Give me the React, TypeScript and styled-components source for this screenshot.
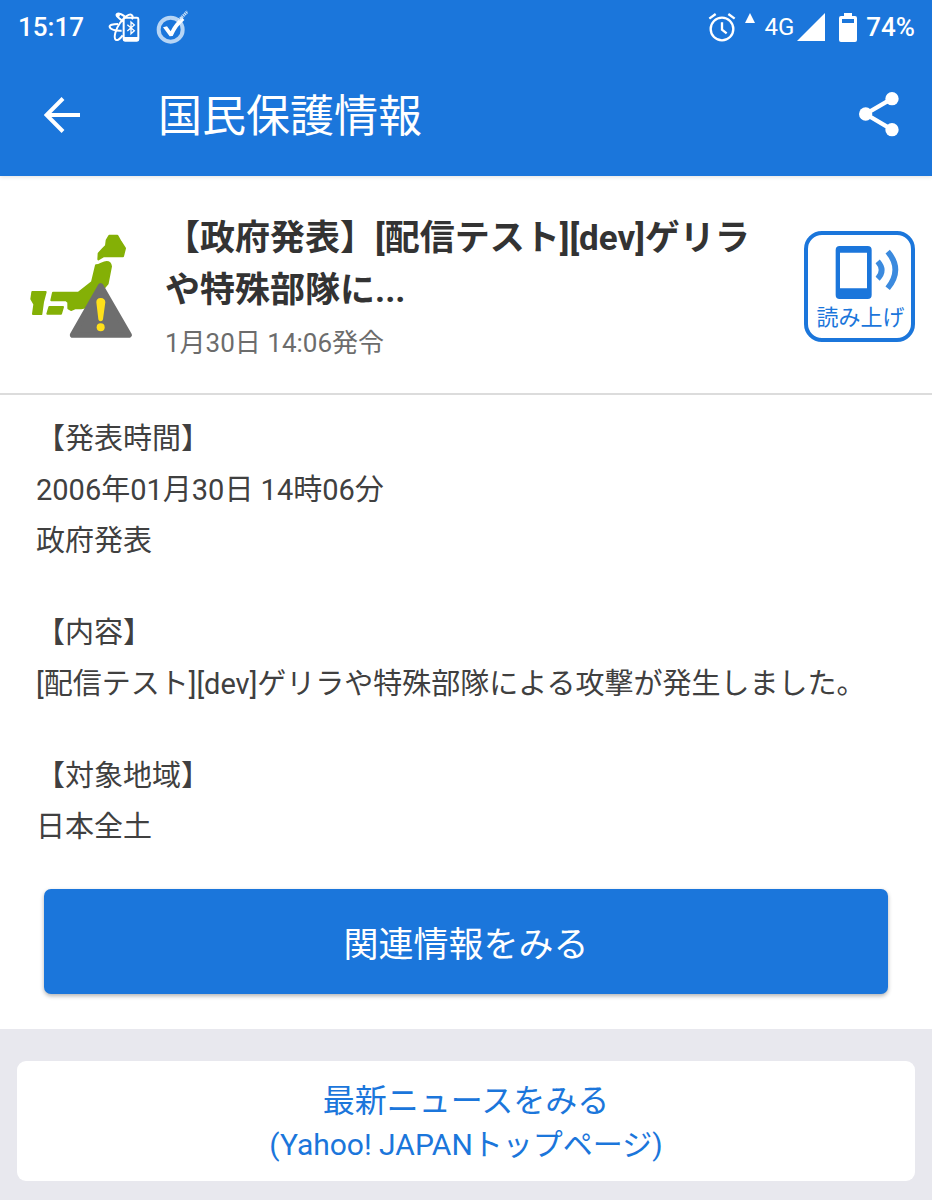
import React from "react";
import styled, { createGlobalStyle } from "styled-components";

const BLUE = "#1b76db";

const GlobalStyle = createGlobalStyle`
  * { box-sizing: border-box; }
  body {
    margin: 0;
    min-height: 100vh;
    background: #e8e8ee;
    color: #333;
    font-family: Roboto, "Noto Sans CJK JP", sans-serif;
  }
  svg { display: block; flex: none; }
  h1, h2, p { margin: 0; }
`;

const Header = styled.header`
  position: relative;
  background: ${BLUE};
  color: #fff;
  box-shadow: 0 1px 4px rgba(0, 0, 0, 0.12);
`;

const StatusBar = styled.div`
  display: flex;
  align-items: center;
  justify-content: space-between;
  height: 54px;
  padding: 0 17px 0 18px;
  font-size: 26px;
  font-weight: 500;
`;

const StatusGroup = styled.div<{ $gap: number }>`
  display: flex;
  align-items: center;
  gap: ${(p) => p.$gap}px;
`;

const Clock = styled.time`
  margin-right: 8px;
`;

const Network = styled.span`
  font-size: 24px;
  font-weight: 400;
`;

const Toolbar = styled.div`
  display: flex;
  align-items: center;
  height: 122px;
  padding: 0 23px 0 32px;
`;

const IconButton = styled.button`
  display: flex;
  align-items: center;
  justify-content: center;
  width: 60px;
  height: 60px;
  padding: 0;
  border: 0;
  background: none;
  color: inherit;
  cursor: pointer;
`;

const PageTitle = styled.h1`
  flex: 1;
  padding: 4px 0 0 66px;
  font-size: 44px;
  font-weight: 400;
  line-height: 60px;
`;

const Summary = styled.section`
  display: flex;
  align-items: center;
  gap: 32px;
  padding: 35px 17px 32px 30px;
  background: #fff;
  border-bottom: 2px solid #dcdcdc;
`;

const SummaryText = styled.div`
  flex: 1;
  padding-top: 2px;
`;

const SummaryTitle = styled.h2`
  font-size: 35px;
  font-weight: 700;
  line-height: 52px;
`;

const Issued = styled.p`
  margin-top: 8px;
  color: #6c6c6c;
  font-size: 26px;
  line-height: 36px;
`;

const ReadAloud = styled.button`
  display: flex;
  flex-direction: column;
  align-items: center;
  justify-content: space-between;
  width: 111px;
  height: 111px;
  padding: 11px 0 7px 2px;
  border: 4px solid ${BLUE};
  border-radius: 18px;
  background: #fff;
  color: ${BLUE};
  font-family: inherit;
  font-size: 22px;
  line-height: 26px;
  white-space: nowrap;
  cursor: pointer;
`;

const Detail = styled.main`
  padding: 19px 36px 35px;
  background: #fff;
  color: #404040;
  font-size: 29px;
  line-height: 51px;
`;

const Paragraph = styled.p`
  & + & { margin-top: 41px; }
`;

const PrimaryButton = styled.button`
  display: block;
  width: calc(100% - 16px);
  height: 105px;
  margin: 36px 8px 0;
  border: 0;
  border-radius: 7px;
  background: ${BLUE};
  color: #fff;
  font-family: inherit;
  font-size: 35px;
  box-shadow: 0 2px 4px rgba(0, 0, 0, 0.3);
  cursor: pointer;
`;

const Footer = styled.footer`
  padding: 32px 17px 19px;
`;

const NewsLink = styled.a`
  display: block;
  padding: 19px 0 15px;
  border-radius: 9px;
  background: #fff;
  color: ${BLUE};
  line-height: 43px;
  text-align: center;
  text-decoration: none;
`;

const NewsLine = styled.span<{ $size: number }>`
  display: block;
  font-size: ${(p) => p.$size}px;
`;

const BluetoothPhoneIcon = () => (
  <svg width="32" height="30" viewBox="320 34 96 90" fill="none" stroke="#fff" strokeWidth="6">
    <path d="M364 104c-8 11-16 17-21 13-7-6 0-32 13-50 13-18 28-29 35-24 4 3 4 7 1 13" />
    <path d="M366 62c-15-9-24-19-19-22 4-3 14 1 24 8" />
    <path d="M350 70c-15 0-27 3-25 9 2 7 17 12 36 11" />
    <rect x="367" y="51" width="44" height="69" rx="4" />
    <path d="M367 114h44" strokeWidth="10" />
    <path d="M378 72l21 18-10 9V64l10 9-21 18" strokeWidth="4" />
    <circle cx="350" cy="43" r="6" fill="#fff" stroke="none" />
  </svg>
);

const CheckBadgeIcon = () => (
  <svg width="32" height="34" viewBox="466 28 96 102" fill="none">
    <circle cx="510" cy="87" r="36" stroke="#b7d5f5" strokeWidth="12" />
    <path d="M487 80l12-3 11 15c8-17 18-29 33-43l8 9c-15 13-26 28-35 48l-9 1z" fill="#fff" />
    <path d="M535 58l26-26" stroke="#cfe3f8" strokeWidth="9" strokeDasharray="4 2" />
  </svg>
);

const AlarmIcon = () => (
  <svg width="28" height="29" viewBox="56 36 84 87" fill="none" stroke="#fff" strokeWidth="7">
    <circle cx="98" cy="84" r="34" />
    <path d="M98 64v22l14 11M60 53l19-14M117 39l19 14" />
  </svg>
);

const Caret = styled.svg`
  align-self: flex-start;
`;

const CaretIcon = () => (
  <Caret width="10" height="10" viewBox="0 0 10 10" fill="#fff">
    <path d="M5 0l5 10H0z" />
  </Caret>
);

const SignalIcon = () => (
  <svg width="28" height="28" viewBox="0 0 28 28" fill="#fff">
    <path d="M28 0v28H0z" />
  </svg>
);

const BatteryIcon = () => (
  <svg width="18" height="29" viewBox="0 0 18 29" fill="#fff" fillRule="evenodd">
    <path d="M5 0h8v3h3a2 2 0 0 1 2 2v22a2 2 0 0 1-2 2H2a2 2 0 0 1-2-2V5a2 2 0 0 1 2-2h3zM3 6v4h12V6z" />
  </svg>
);

const BackIcon = () => (
  <svg width="36" height="36" viewBox="0 0 36 36" fill="none" stroke="#fff" strokeWidth="4">
    <path d="M19 1.500L2.500 18 19 34.500M3 18h33" />
  </svg>
);

const ShareIcon = () => (
  <svg width="42" height="46" viewBox="54 34 126 138" fill="#fff">
    <path d="M156 54L77 100l79 47" fill="none" stroke="#fff" strokeWidth="13" />
    <circle cx="156" cy="54" r="20" />
    <circle cx="77" cy="100" r="20" />
    <circle cx="156" cy="147" r="20" />
  </svg>
);

const JapanAlertIcon = () => (
  <svg width="103" height="105" viewBox="30 39 309 315" strokeLinejoin="round">
    <g fill="#84b006" stroke="#84b006" strokeWidth="6">
      <path d="M268 44h24l10 18 13 20-6 24h-59l-15 9 1-18 13-14 9-9 2-16z" />
      <path d="M228 133c12 0 20-10 32-10 8 0 12 6 13 13l-10 52-60 70-20 4h-18l-12 5-8-5v-18l-7-6H94l5-23h76l41-32z" />
      <path d="M37 213h40l-8 30-5 36H39l4-29-9-16z" />
      <path d="M88 258h41l-6 20H82z" />
    </g>
    <path d="M242 195L327 342H158z" fill="#6e6e6e" stroke="#6e6e6e" strokeWidth="17" />
    <path d="M242 231c9 0 14 5 14 13l-7 51c-1 8-13 8-14 0l-6-51c0-8 4-13 13-13z" fill="#ffe01a" />
    <circle cx="242" cy="319" r="12" fill="#ffe01a" />
  </svg>
);

const SpeakingPhoneIcon = () => (
  <svg width="78" height="53" viewBox="94 92 234 159" fill="none">
    <path
      d="M147 92h84a12 12 0 0 1 12 12v135a12 12 0 0 1-12 12h-84a12 12 0 0 1-12-12V104a12 12 0 0 1 12-12zM148 112v107h81V112z"
      fill={BLUE}
      fillRule="evenodd"
    />
    <path d="M261 138q24 27 0 52" stroke="#3b8ade" strokeWidth="17" />
    <path d="M291 109q46 53 0 110" stroke="#3b8ade" strokeWidth="17" />
  </svg>
);

export default function App() {
  return (
    <>
      <GlobalStyle />
      <Header>
        <StatusBar>
          <StatusGroup $gap={16}>
            <Clock>15:17</Clock>
            <BluetoothPhoneIcon />
            <CheckBadgeIcon />
          </StatusGroup>
          <StatusGroup $gap={14}>
            <StatusGroup $gap={9}>
              <AlarmIcon />
              <CaretIcon />
              <StatusGroup $gap={3}>
                <Network>4G</Network>
                <SignalIcon />
              </StatusGroup>
            </StatusGroup>
            <StatusGroup $gap={9}>
              <BatteryIcon />
              <span>74%</span>
            </StatusGroup>
          </StatusGroup>
        </StatusBar>
        <Toolbar>
          <IconButton aria-label="戻る">
            <BackIcon />
          </IconButton>
          <PageTitle>国民保護情報</PageTitle>
          <IconButton aria-label="共有">
            <ShareIcon />
          </IconButton>
        </Toolbar>
      </Header>
      <Summary>
        <JapanAlertIcon />
        <SummaryText>
          <SummaryTitle>
            【政府発表】[配信テスト][dev]ゲリラ
            <br />
            や特殊部隊に...
          </SummaryTitle>
          <Issued>1月30日 14:06発令</Issued>
        </SummaryText>
        <ReadAloud>
          <SpeakingPhoneIcon />
          読み上げ
        </ReadAloud>
      </Summary>
      <Detail>
        <Paragraph>
          【発表時間】
          <br />
          2006年01月30日 14時06分
          <br />
          政府発表
        </Paragraph>
        <Paragraph>
          【内容】
          <br />
          [配信テスト][dev]ゲリラや特殊部隊による攻撃が発生しました。
        </Paragraph>
        <Paragraph>
          【対象地域】
          <br />
          日本全土
        </Paragraph>
        <PrimaryButton>関連情報をみる</PrimaryButton>
      </Detail>
      <Footer>
        <NewsLink href="#news">
          <NewsLine $size={32}>最新ニュースをみる</NewsLine>
          <NewsLine $size={30}>(Yahoo! JAPANトップページ)</NewsLine>
        </NewsLink>
      </Footer>
    </>
  );
}
